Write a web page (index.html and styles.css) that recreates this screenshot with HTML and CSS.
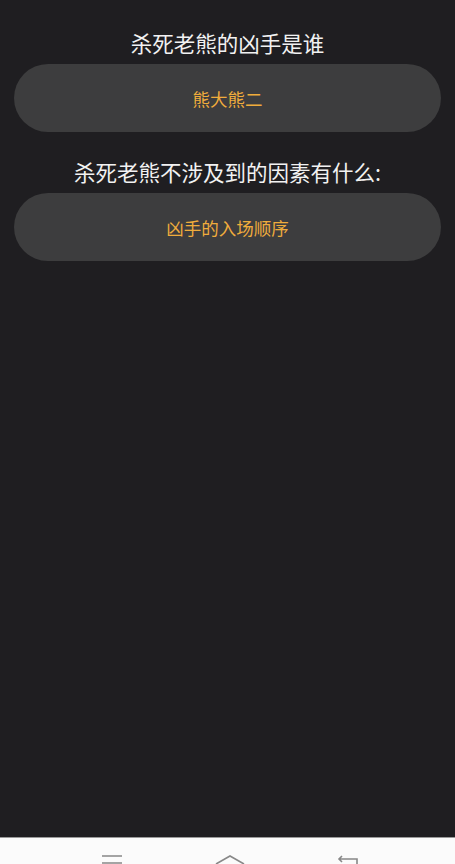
FILE: index.html
```html
<!DOCTYPE html>
<html lang="zh-CN">
<head>
  <meta charset="UTF-8" />
  <title>杀死老熊</title>
  <link rel="stylesheet" href="styles.css">
</head>
<body>
<div class="page">
  <div class="quiz">
    <div class="question">杀死老熊的凶手是谁</div>
    <div class="answer">熊大熊二</div>
    <div class="question">杀死老熊不涉及到的因素有什么:</div>
    <div class="answer">凶手的入场顺序</div>
  </div>
  <div class="navbar">
    <svg class="nav-icon" width="24" height="10" viewBox="0 0 24 10">
      <path d="M2 2 H22 M2 9 H22" stroke="#888" stroke-width="1.6" fill="none"/>
    </svg>
    <svg class="nav-icon" width="32" height="10" viewBox="0 0 32 10">
      <path d="M2 10 L16 2 L30 10" stroke="#888" stroke-width="1.6" fill="none"/>
    </svg>
    <svg class="nav-icon" width="24" height="10" viewBox="0 0 24 10">
      <path d="M6 2 L3 5 L6 8 M3 5 H21 V10" stroke="#888" stroke-width="1.6" fill="none"/>
    </svg>
  </div>
</div>
</body>
</html>
```

FILE: styles.css
```css
body {
  margin: 0;
  background: #1f1e21;
  font-family: "Noto Sans CJK SC", "Noto Sans", sans-serif;
}
.page {
  height: 864px;
  display: flex;
  flex-direction: column;
  overflow: hidden;
}
.quiz {
  flex: 1;
  padding: 28px 14px 0 14px;
}
.question {
  color: #f2f2f2;
  font-size: 21.5px;
  line-height: 30px;
  text-align: center;
  margin-bottom: 6px;
}
.answer {
  height: 68px;
  border-radius: 34px;
  background: #3d3d3e;
  color: #f0ac3c;
  font-size: 17.5px;
  display: flex;
  align-items: center;
  justify-content: center;
  margin-bottom: 25px;
}
.navbar {
  height: 26px;
  background: #fbfbfb;
  border-top: 1px solid #9a9a9a;
  display: flex;
  justify-content: center;
  align-items: flex-end;
  gap: 90px;
  padding-left: 4px;
}
.nav-icon {
  display: block;
}
```
